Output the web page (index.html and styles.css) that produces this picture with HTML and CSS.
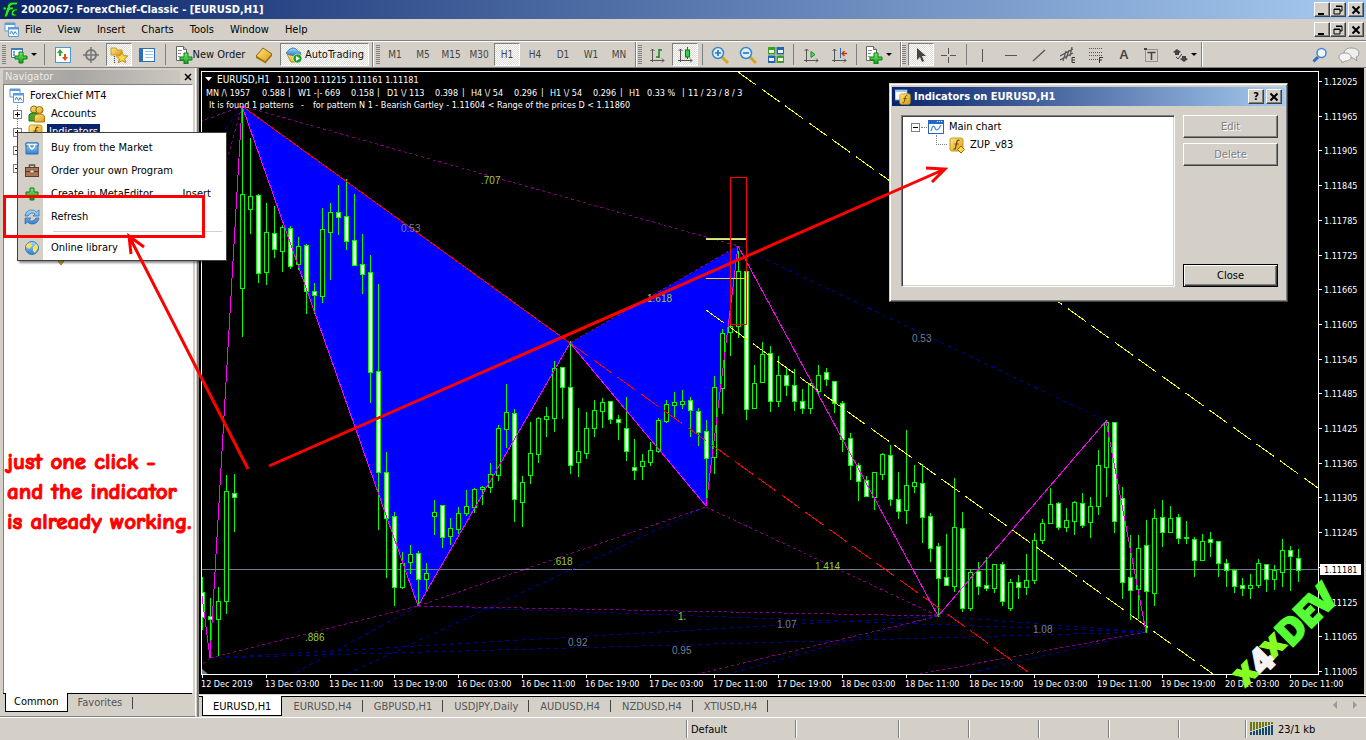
FILE: index.html
```html
<!DOCTYPE html>
<html lang="en">
<head>
<meta charset="utf-8">
<title>2002067: ForexChief-Classic - [EURUSD,H1]</title>
<link rel="stylesheet" href="styles.css">
</head>
<body>
<svg class="defs" aria-hidden="true">
  <defs>
    <linearGradient id="gold" x1="0" y1="0" x2="1" y2="1"><stop offset="0" stop-color="#ffe98a"/><stop offset="1" stop-color="#d99a10"/></linearGradient>
    <linearGradient id="leaf" x1="0" y1="0" x2="0" y2="1"><stop offset="0" stop-color="#7df06a"/><stop offset="1" stop-color="#0f9a1c"/></linearGradient>
    <linearGradient id="sky" x1="0" y1="0" x2="0" y2="1"><stop offset="0" stop-color="#a9dcf8"/><stop offset="1" stop-color="#2f7fd0"/></linearGradient>
    <symbol id="i-charts" viewBox="0 0 16 16"><path d="M1 1h10v8H1z" fill="#fff" stroke="#5b9bd8"/><path d="M1 1h10v2H1z" fill="#5b9bd8"/><path d="M4.500 5.500h10v9h-10z" fill="#fff" stroke="#5b9bd8"/><path d="M4 5h11v2.500H4z" fill="#5b9bd8"/><path d="M6 12l1.500-3 2 3.500 1.500-3 2 3" fill="none" stroke="#3c7fc8"/></symbol>
    <symbol id="i-plus" viewBox="0 0 16 16"><path d="M6 2h4v4h4v4h-4v4H6v-4H2V6h4z" fill="url(#leaf)" stroke="#0b7a14"/></symbol>
    <symbol id="i-f" viewBox="0 0 16 16"><rect x="1" y="1" width="13" height="13" rx="2" fill="url(#gold)" stroke="#c49a20"/><path d="M10.500 3.500c-2-1-2.600.5-3 3L6.500 11c-.3 1.200-1 1.300-2 1M5.500 7h4" fill="none" stroke="#6d4a00" stroke-width="1.200"/></symbol>
    <symbol id="i-axes" viewBox="0 0 16 16"><path d="M3.500 2v13M1 13.500h14M1.500 4l2-2 2 2M13 11.500l2 2-2 2" fill="none" stroke="#555"/></symbol>
    <symbol id="i-sheet" viewBox="0 0 18 18"><path d="M1.500.500h7l3 3v11h-10z" fill="#fff" stroke="#666"/><path d="M8.500.500v3h3" fill="#ccc" stroke="#666"/><path d="M3 4.500h4M3 7.500h3M3 10.500h2" stroke="#888"/><path d="M9 7h4v4h4v3h-4v4H9v-4H5v-3h4z" fill="url(#leaf)" stroke="#0b7a14"/></symbol>
  </defs>
</svg>

<header class="titlebar">
  <svg class="app-logo" viewBox="0 0 17 17"><path d="M2 16L5 6Q6 1 11 1H16L15 4H11Q9 4 8 6H12L11 9H8L5 16ZM1 6H5L4 9H1Z" fill="#2ee04a" stroke="#053c0b"/><path d="M16 8Q10 7 9 12Q9 16 14 15L15 13Q11 14 12 11Q13 9 15 10Z" fill="#2ee04a" stroke="#053c0b"/></svg>
  <h1>2002067: ForexChief-Classic - [EURUSD,H1]</h1>
  <div class="winbtns">
    <button class="wb" aria-label="Minimize"><svg viewBox="0 0 12 10"><path d="M2 8h6v2H2z"/></svg></button>
    <button class="wb" aria-label="Restore"><svg viewBox="0 0 12 10"><path d="M4 1h6v5H8M4 1.500h6M2 4h6v5H2zM2 4.500h6" fill="none" stroke="#000"/></svg></button>
    <button class="wb wb-close" aria-label="Close window"><svg viewBox="0 0 12 10"><path d="M2.500 1.500l7 7M9.500 1.500l-7 7" stroke="#000" stroke-width="2"/></svg></button>
  </div>
</header>

<nav class="menubar">
  <svg class="ic16" viewBox="0 0 16 16"><use href="#i-charts"/></svg>
  <button>File</button><button>View</button><button>Insert</button><button>Charts</button><button>Tools</button><button>Window</button><button>Help</button>
  <div class="winbtns">
    <button class="wb" aria-label="Minimize chart"><svg viewBox="0 0 12 10"><path d="M2 8h6v2H2z"/></svg></button>
    <button class="wb" aria-label="Restore chart"><svg viewBox="0 0 12 10"><path d="M4 1h6v5H8M4 1.500h6M2 4h6v5H2zM2 4.500h6" fill="none" stroke="#000"/></svg></button>
    <button class="wb wb-close" aria-label="Close chart"><svg viewBox="0 0 12 10"><path d="M2.500 1.500l7 7M9.500 1.500l-7 7" stroke="#000" stroke-width="2"/></svg></button>
  </div>
</nav>

<div class="toolbar">
  <div class="group g1">
    <i class="grip"></i>
    <button class="tb wide" aria-label="New chart"><svg class="ic18" viewBox="0 0 18 18"><path d="M1.500 2.500h11v9h-11z" fill="#fff" stroke="#3b7fc0"/><path d="M1 2h12v2H1z" fill="#3b7fc0"/><path d="M4 5v5M3 6h2M3 9h2" stroke="#3b7fc0"/><path d="M9 6h4v4h4v3h-4v4H9v-4H5v-3h4z" fill="url(#leaf)" stroke="#0b7a14"/></svg><i class="caret"></i></button>
    <i class="sep"></i>
    <button class="tb" aria-label="Market Watch"><svg class="ic18" viewBox="0 0 18 18"><rect x="1.500" y="1.500" width="15" height="15" fill="#fff" stroke="#4a97d6"/><path d="M6 3l3 4H7v3H5V7H3z" fill="#1fae2c"/><path d="M11 15l-3-4h2V8h2v3h2z" fill="#e0521c"/></svg></button>
    <button class="tb" aria-label="Data Window"><svg class="ic18" viewBox="0 0 18 18"><circle cx="9" cy="9" r="5" fill="none" stroke="#777" stroke-width="2"/><path d="M9 1v16M1 9h16" stroke="#777" stroke-width="1.500"/></svg></button>
    <button class="tb on" aria-label="Navigator"><svg class="ic18" viewBox="0 0 18 18"><path d="M1 2h5l1 2h5v5H1z" fill="url(#gold)" stroke="#c89c2a"/><path d="M4.500 10v7" stroke="#444" stroke-dasharray="1 1"/><path d="M12 6l1.700 3.600 4 .4-3 2.700.9 4-3.600-2-3.600 2 .9-4-3-2.700 4-.4z" fill="#ffd84a" stroke="#b98a14"/></svg></button>
    <button class="tb" aria-label="Terminal"><svg class="ic18" viewBox="0 0 18 18"><rect x="1.500" y="2.500" width="15" height="13" fill="#fff" stroke="#2d6fb6"/><path d="M2 3h3v12H2z" fill="#2d6fb6"/><path d="M7 5.500h8M7 8.500h8M7 11.500h8" stroke="#9bc2e8"/></svg></button>
    <i class="sep"></i>
    <button class="tb text"><svg class="ic18" viewBox="0 0 18 18"><use href="#i-sheet"/></svg>New Order</button>
    <button class="tb" aria-label="MetaEditor"><svg class="ic18" viewBox="0 0 18 18"><path d="M1 10l7-8 9 6-7 8z" fill="url(#gold)" stroke="#8f6205"/><path d="M1 10v2l9 5v-2zM10 16l7-8v2l-7 8z" fill="#a8720a"/></svg></button>
    <button class="tb text on auto"><svg class="ic18" viewBox="0 0 18 18"><path d="M2 8l7 2 7-2-3 8H6z" fill="url(#gold)" stroke="#b98a14"/><path d="M1 7c2-1 3-5 7-5s5 4 8 5c-4 3-11 3-15 0z" fill="url(#sky)" stroke="#3a83ba"/><circle cx="12.500" cy="12.500" r="4.500" fill="#16a32a" stroke="#fff" stroke-width=".6"/><path d="M11 10l4 2.500-4 2.500z" fill="#fff"/></svg>AutoTrading</button>
  </div>
  <div class="group g2">
    <i class="grip"></i>
    <button class="tb tf">M1</button><button class="tb tf">M5</button><button class="tb tf">M15</button><button class="tb tf">M30</button><button class="tb tf on">H1</button><button class="tb tf">H4</button><button class="tb tf">D1</button><button class="tb tf">W1</button><button class="tb tf">MN</button>
  </div>
  <div class="group g3">
    <i class="grip"></i>
    <button class="tb" aria-label="Bar chart"><svg class="ic16" viewBox="0 0 16 16"><use href="#i-axes"/><path d="M10 2v9M10 3h3M7 10h3" stroke="#16861e" stroke-width="1.500"/></svg></button>
    <button class="tb on" aria-label="Candlesticks"><svg class="ic16" viewBox="0 0 16 16"><use href="#i-axes"/><path d="M10.500 0v12" stroke="#0b7a14"/><rect x="8.500" y="3" width="4" height="7" fill="#2ad63a" stroke="#0b7a14"/></svg></button>
    <i class="sep s3"></i>
    <button class="tb" aria-label="Zoom in"><svg class="ic18" viewBox="0 0 18 18"><path d="M11 11l6 6" stroke="#d9a520" stroke-width="3"/><circle cx="7" cy="7" r="5.500" fill="#d9effd" stroke="#3c87c9" stroke-width="1.500"/><path d="M7 4v6M4 7h6" stroke="#2b6fb4" stroke-width="1.600"/></svg></button>
    <button class="tb" aria-label="Zoom out"><svg class="ic18" viewBox="0 0 18 18"><path d="M11 11l6 6" stroke="#d9a520" stroke-width="3"/><circle cx="7" cy="7" r="5.500" fill="#d9effd" stroke="#3c87c9" stroke-width="1.500"/><path d="M4 7h6" stroke="#2b6fb4" stroke-width="1.600"/></svg></button>
    <button class="tb" aria-label="Tile windows"><svg class="ic18" viewBox="0 0 18 18"><path d="M1 1h8v8H1zM9 9h8v8H9z" fill="#3f9e22"/><path d="M9 1h8v8H9zM1 9h8v8H1z" fill="#2264b8"/><path d="M2 4h5v3H2zM11 4h5v3h-5zM2 12h5v3H2zM11 12h5v3h-5z" fill="#eef6ea"/><path d="M9 1v16M1 9h16" stroke="#d4d0c8"/></svg></button>
    <i class="sep s3"></i>
    <button class="tb" aria-label="Auto scroll"><svg class="ic16" viewBox="0 0 16 16"><use href="#i-axes"/><path d="M8 4.500l4 3-4 3z" fill="#5fdc5f" stroke="#158a1c"/></svg></button>
    <button class="tb" aria-label="Chart shift"><svg class="ic16" viewBox="0 0 16 16"><use href="#i-axes"/><path d="M9.500 1v10" stroke="#2a6ca8"/><path d="M16 6.500h-5M13.500 4L11 6.500l2.500 2.500" fill="none" stroke="#cc3010" stroke-width="1.300"/></svg></button>
    <i class="sep s3"></i>
    <button class="tb wide" aria-label="Indicators list"><svg class="ic18" viewBox="0 0 18 18"><use href="#i-sheet"/></svg><i class="caret"></i></button>
  </div>
  <div class="group g4">
    <i class="grip"></i>
    <button class="tb on" aria-label="Cursor"><svg class="ic16" viewBox="0 0 16 16"><path d="M4 1v12l3-3 2 5 2-1-2-5h4z" fill="#444"/></svg></button>
    <button class="tb" aria-label="Crosshair"><svg class="ic16" viewBox="0 0 16 16"><path d="M7.500 1v6M7.500 10v6M0 8.500h6M9 8.500h6" stroke="#555"/></svg></button>
    <i class="sep s3"></i>
    <button class="tb" aria-label="Vertical line"><svg class="ic16" viewBox="0 0 16 16"><path d="M6.500 2v13" stroke="#555"/></svg></button>
    <button class="tb" aria-label="Horizontal line"><svg class="ic16" viewBox="0 0 16 16"><path d="M1 8.500h12" stroke="#555"/></svg></button>
    <button class="tb" aria-label="Trendline"><svg class="ic16" viewBox="0 0 16 16"><path d="M1 14L13 3" stroke="#555" stroke-width="1.300"/></svg></button>
    <button class="tb" aria-label="Equidistant channel"><svg class="ic16" viewBox="0 0 16 16"><path d="M0 9l13-7M0 13l13-7M3 14L6 4M6 12L9 3M10 9l2-9" stroke="#555" stroke-width="1.200"/><path d="M15 10.500h-3v5h3M12 13h3" fill="none" stroke="#333"/></svg></button>
    <button class="tb" aria-label="Fibonacci retracement"><svg class="ic16" viewBox="0 0 16 16"><path d="M1 1.500h14M1 5.500h14M1 8.500h14M1 12.500h9" stroke="#555" stroke-dasharray="1 1"/><path d="M15 10.500h-3.500V16M11.500 13H14" fill="none" stroke="#333"/></svg></button>
    <button class="tb letter" aria-label="Text">A</button>
    <button class="tb" aria-label="Text label"><svg class="ic16" viewBox="0 0 16 16"><path d="M1.500 2.500h12v12h-12z" fill="none" stroke="#555" stroke-dasharray="1 1"/><path d="M3.500 5.500h8M7.500 5v8" stroke="#444" stroke-width="1.600"/><path d="M0 1h3v2H0z" fill="#444"/></svg></button>
    <button class="tb wide" aria-label="Arrows"><svg class="ic16" viewBox="0 0 16 16"><path d="M5 2l4 3-2 1v2H3V6L1 5zM12 15l-4-3 2-1V9h4v2l2 1z" fill="#444"/><path d="M4 10l2 2 4-5" fill="none" stroke="#444"/></svg><i class="caret"></i></button>
  </div>
  <div class="group g5">
    <button class="tb" aria-label="Search"><svg class="ic16" viewBox="0 0 16 16"><path d="M1.500 14.500L6 10" stroke="#2d6fc4" stroke-width="3"/><circle cx="9.500" cy="6" r="4.500" fill="#eef6fd" stroke="#4488d0" stroke-width="1.500"/></svg></button>
    <button class="tb" aria-label="Chat"><svg class="chat" viewBox="0 0 22 16"><path d="M13 1c5 0 8 2 8 5s-2 4-3 4l1 4-4-3c-6 0-9-2-9-5s3-5 7-5z" fill="#eee" stroke="#999"/><path d="M7 6c4 0 6 2 6 4s-2 4-6 4l-3 2v-2c-2-1-3-2-3-4s2-4 6-4z" fill="#f4f4f4" stroke="#999"/></svg></button>
  </div>
</div>

<main class="work">
  <aside class="navigator">
    <div class="nav-head"><span>Navigator</span><button aria-label="Close navigator"><svg viewBox="0 0 8 8"><path d="M1 1l6 6M7 1L1 7" stroke="#000" stroke-width="1.500"/></svg></button></div>
    <ul class="tree">
      <li><svg class="ic16" viewBox="0 0 16 16"><use href="#i-charts"/></svg><span>ForexChief MT4</span></li>
      <li class="sub"><i class="box"></i><svg class="ic18" viewBox="0 0 18 18"><circle cx="6" cy="4.500" r="3.500" fill="url(#gold)" stroke="#8f6a0c"/><path d="M1 16V10q1-2 5-2t5 2v6z" fill="#3dae2c" stroke="#1f6f14"/><circle cx="11.500" cy="5" r="3.500" fill="url(#gold)" stroke="#8f6a0c"/><path d="M6.500 17v-6q1-2 5-2t5 2v6z" fill="url(#gold)" stroke="#a87a10"/></svg><span>Accounts</span></li>
      <li class="sub"><i class="box"></i><svg class="ic16" viewBox="0 0 16 16"><use href="#i-f"/></svg><span class="sel">Indicators</span></li>
      <li class="sub"><i class="box"></i></li>
      <li class="sub"><i class="box"></i></li>
      <li></li><li></li><li></li><li></li>
      <li class="deep"><svg class="ic16" viewBox="0 0 16 16"><path d="M8 3l5 5-5 7-5-7z" fill="url(#gold)" stroke="#a87a10"/></svg></li>
    </ul>
    <p class="note">just one click -<br>and the indicator<br>is already working.</p>
    <div class="nav-tabs"><button class="cur">Common</button><button>Favorites</button></div>
  </aside>

  <section class="charts">
    <div class="chart"><svg id="chart" role="img" aria-label="EURUSD hourly chart"></svg></div>
    <div class="tabs">
      <button class="cur">EURUSD,H1</button><button>EURUSD,H4</button><button>GBPUSD,H1</button><button>USDJPY,Daily</button><button>AUDUSD,H4</button><button>NZDUSD,H4</button><button>XTIUSD,H4</button>
      <div class="scroll"><button aria-label="Scroll left"><svg viewBox="0 0 6 8"><path d="M5 0v8L1 4z"/></svg></button><button aria-label="Scroll right"><svg viewBox="0 0 6 8"><path d="M1 0v8l4-4z"/></svg></button></div>
    </div>
  </section>
</main>

<footer class="status">
  <span class="c-help"></span><span class="c-profile">Default</span><span class="c-time"></span><span></span><span></span><span></span><span></span><span class="c-vol"></span>
  <span class="c-net"><svg viewBox="0 0 24 13" id="net"></svg>23/1 kb</span>
</footer>

<div class="context" role="menu">
  <button role="menuitem"><svg class="ic16" viewBox="0 0 16 16"><path d="M2 3h12v11H2z" fill="url(#sky)" stroke="#2a6fb4"/><path d="M2 3h12v3H2z" fill="#dff0fb" stroke="#2a6fb4"/><path d="M5 5q3 8 6 0" fill="none" stroke="#fff" stroke-width="1.500"/></svg><span>Buy from the Market</span></button>
  <button role="menuitem"><svg class="ic16" viewBox="0 0 16 16"><path d="M5.500 4V2h5v2" fill="none" stroke="#555" stroke-width="1.500"/><rect x="1.500" y="4.500" width="13" height="9" fill="#a9765a" stroke="#5e3a26"/><path d="M2 8.500h12" stroke="#5e3a26"/><path d="M6 7h4v3H6z" fill="#f0e0c0" stroke="#5e3a26" stroke-width=".6"/></svg><span>Order your own Program</span></button>
  <button role="menuitem"><svg class="ic16" viewBox="0 0 16 16"><use href="#i-plus"/></svg><span>Create in MetaEditor</span><kbd>Insert</kbd></button>
  <button role="menuitem"><svg class="ic16" viewBox="0 0 16 16"><path d="M1 7q1-6 7-6 3 0 4.500 2L15 1v6H9l2-2q-4-3-7 2zM15 9q-1 6-7 6-3 0-4.500-2L1 15V9h6l-2 2q4 3 7-2z" fill="url(#sky)" stroke="#2f6ab0" stroke-width=".7"/></svg><span>Refresh</span></button>
  <hr>
  <button role="menuitem"><svg class="ic16" viewBox="0 0 16 16"><circle cx="8" cy="8" r="6.500" fill="url(#sky)" stroke="#2f7fc4"/><path d="M3 4l4-1 1 3-3 3-3-2zM9 7l4-3 1 4-3 5-2-2z" fill="#ffe05a"/></svg><span>Online library</span></button>
</div>

<section class="dialog" role="dialog" aria-labelledby="dlg-title">
  <div class="dlg-head">
    <svg class="ic16" viewBox="0 0 16 16"><rect x="0" y="1" width="12" height="10" fill="#fff" stroke="#5b9bd8"/><path d="M0 1h12v2H0z" fill="#9cc8f0"/><g transform="translate(4 4) scale(.8)"><use href="#i-f" width="16" height="16"/></g></svg>
    <h2 id="dlg-title">Indicators on EURUSD,H1</h2>
    <div class="winbtns">
      <button class="wb q" aria-label="Help">?</button>
      <button class="wb wb-close" aria-label="Close dialog"><svg viewBox="0 0 12 10"><path d="M2.500 1.500l7 7M9.500 1.500l-7 7" stroke="#000" stroke-width="2"/></svg></button>
    </div>
  </div>
  <div class="dlg-body">
    <ul class="dlg-tree">
      <li><i class="box minus"></i><i class="dots"></i><svg class="ic16" viewBox="0 0 16 16"><rect x=".5" y="1.500" width="15" height="13" fill="#fff" stroke="#2a66c0"/><path d="M0 1h16v4H0z" fill="#2a66c0"/><path d="M9 2.500h6" stroke="#fff" stroke-dasharray="1 1"/><path d="M3 12q2-8 4-3t6-3" fill="none" stroke="#4d8fd8" stroke-width="1.300"/></svg><span>Main chart</span></li>
      <li class="leaf"><i class="elbow"></i><svg class="ic16" viewBox="0 0 16 16"><use href="#i-f"/><path d="M12 9l3.500 3.500L12 16l-3.500-3.500z" fill="#ffd84a" stroke="#8f6a0c"/></svg><span>ZUP_v83</span></li>
    </ul>
    <div class="dlg-side"><button disabled>Edit</button><button disabled>Delete</button><button class="default">Close</button></div>
  </div>
</section>

<svg class="marks" aria-hidden="true">
  <rect x="4.500" y="196.500" width="199" height="40"/>
  <path d="M248 469L129 236M131 254L129 236L144 247"/>
  <path d="M269 466L945 169M926 168L945 169L932 182"/>
  <g class="brand" transform="translate(1291 649) rotate(-45)">
    <text class="small" x="-60" y="-5">x</text><text class="small" x="-21" y="-5">x</text><text x="0" y="0">D</text><text x="26" y="0">E</text><text x="44" y="0">V</text><text class="four" x="-40" y="0">4</text>
  </g>
</svg>
<script src="chart.js"></script>
</body>
</html>
```
FILE: styles.css
```css
* { box-sizing: border-box; }
body {
  margin: 0; height: 100vh; overflow: hidden; position: relative;
  display: flex; flex-direction: column;
  background: #d4d0c8; color: #000;
  font: 11px/14px "DejaVu Sans Condensed", "Noto Sans", sans-serif;
}
button { font: inherit; color: inherit; background: none; border: 0; padding: 0; margin: 0; }
h1, h2, p, ul { margin: 0; padding: 0; }
ul { list-style: none; }
.defs { position: absolute; width: 0; height: 0; }
.ic16 { width: 16px; height: 16px; flex: none; }
.ic18 { width: 18px; height: 18px; flex: none; }

.titlebar { height: 19px; flex: none; display: flex; align-items: center; padding: 0 2px; background: linear-gradient(90deg, #0a246a, #a6caf0); color: #fff; }
.titlebar h1 { font-size: 11px; font-weight: bold; padding-left: 2px; }
.app-logo { width: 17px; height: 17px; }
.winbtns { margin-left: auto; display: flex; }
.wb {
  width: 16px; height: 15px; background: #d4d0c8; color: #000; display: flex; align-items: center; justify-content: center;
  border: 1px solid; border-color: #fff #404040 #404040 #fff; box-shadow: inset -1px -1px #808080;
}
.wb svg { width: 12px; height: 10px; }
.wb-close { margin-left: 2px; }
.q { font-weight: bold; }

.menubar { height: 22px; flex: none; display: flex; align-items: center; padding: 0 2px 0 4px; border-bottom: 1px solid #808080; }
.menubar > button { margin-left: 16px; padding-top: 1px; }
.menubar > svg + button { margin-left: 5px; }

.toolbar { height: 27px; flex: none; display: flex; border-top: 1px solid #fff; border-bottom: 1px solid #808080; color: #444; }
.group { display: flex; align-items: center; padding-left: 2px; border-right: 1px solid #808080; box-shadow: 1px 0 #fff; }
.g1 { width: 373px; }
.g2 { width: 263px; padding-left: 3px; }
.g3 { width: 265px; }
.g4 { width: 301px; padding-left: 1px; }
.g5 { flex: 1; border: 0; box-shadow: none; justify-content: flex-end; padding-right: 2px; }
.grip { width: 4px; height: 19px; margin-right: 1px; flex: none; background: repeating-linear-gradient(#808080 0 1px, #d4d0c8 1px 2px); }
.sep { width: 1px; height: 21px; margin: 0 4px; background: #808080; flex: none; }
.s3 { margin: 0 3px; }
.tb { width: 28px; height: 23px; flex: none; display: flex; align-items: center; justify-content: center; }
.g1 .tb { color: #111; }
.on { width: 26px; margin: 0 1px; border: 1px solid; border-color: #808080 #fff #fff #808080; background: repeating-conic-gradient(#fff 0 25%, #dedbd5 0 50%) 0 0 / 2px 2px; }
.tb.wide { width: 36px; gap: 3px; }
.tb.text { width: 80px; }
.tb.auto { width: 89px; gap: 2px; margin-left: 2px; }
.tb.tf { font-size: 10px; }
.letter { font: bold 13px "Liberation Sans", sans-serif; }
.caret { border: 3px solid transparent; border-top-color: #000; border-bottom: 0; }
.toolbar .g1 .wide { width: 33px; }
.g5 .tb { width: 30px; }
.g5 .tb:first-child { width: 28px; }
.chat { width: 22px; height: 16px; }

.work { flex: 1; min-height: 0; display: flex; }
.navigator { width: 196px; flex: none; display: flex; flex-direction: column; padding: 2px 2px 3px 3px; border-right: 1px solid #fff; border-bottom: 1px solid #808080; }
.nav-head { height: 14px; flex: none; display: flex; justify-content: space-between; align-items: center; }
.nav-head span { flex: none; width: 177px; padding-left: 2px; color: #eceae6; background: linear-gradient(90deg, #b4b1ab, #a8a6a2 40%, #cbc7c0); }
.nav-head button { width: 8px; height: 8px; margin-right: 1px; display: flex; }
.tree { flex: 1; background: #fff; border: 1px solid #808080; border-right-color: #fff; border-bottom: 0; padding: 2px 5px; }
.tree li { height: 18px; display: flex; align-items: center; gap: 3px; }
.tree .sub { padding-left: 4px; background: linear-gradient(90deg, transparent 9px, #fff 9px) top left / 9px 100% no-repeat, repeating-linear-gradient(#808080 0 1px, transparent 1px 2px) 8px 0 / 1px 100% no-repeat; }
.tree .deep { padding-left: 44px; }
.tree .sub .box { margin-right: 3px; }
.box { width: 9px; height: 9px; flex: none; border: 1px solid #808080; background: linear-gradient(#000, #000) center / 5px 1px no-repeat, linear-gradient(#000, #000) center / 1px 5px no-repeat, #fff; }
.box.minus { background: linear-gradient(#000, #000) center / 5px 1px no-repeat, #fff; }
.tree span { padding: 1px 2px; }
.sel { background: #0a246a; color: #fff; }
.note { position: absolute; left: 7px; top: 447px; z-index: 2; color: #f00; -webkit-text-stroke: 1px #f00; font: bold 23px/30px "Comic Sans MS", "Comic Neue", Lato, sans-serif; white-space: nowrap; }
.nav-tabs { flex: none; height: 20px; display: flex; border-top: 1px solid #000; padding-left: 2px; margin-right: 1px; color: #555; }
.nav-tabs button { padding: 0 8px; height: 18px; }
.nav-tabs button + button { padding: 0 11px 0 10px; background: linear-gradient(#444, #444) right center / 1px 12px no-repeat; }
.nav-tabs .cur { background: #fff; color: #000; border: 1px solid #000; border-top: 0; margin-top: -1px; height: 19px; }

.charts { flex: 1; min-width: 0; display: flex; flex-direction: column; border-left: 2px solid #808080; margin-left: 1px; }
.chart { flex: 1; min-height: 0; background: #000; margin-right: 2px; overflow: hidden; }
.chart svg { display: block; width: 100%; height: 100%; font: 9px "DejaVu Sans Condensed", "Noto Sans", sans-serif; fill: #fff; }
.tabs { height: 22px; flex: none; display: flex; align-items: flex-start; margin-top: 1px; padding-left: 3px; border-top: 1px solid #fff; color: #555; box-shadow: inset 0 1px #000; border-bottom: 1px solid #d4d0c8; }
.tabs > button { padding: 2px 11px 0 11px; height: 20px; background: linear-gradient(#444, #444) right center / 1px 12px no-repeat; }
.tabs .cur { padding: 2px 10px 0; background: #fff; color: #000; border: 1px solid #000; border-top: 0; }
.scroll { margin-left: auto; display: flex; gap: 14px; padding: 5px 8px 0 0; }
.scroll svg { width: 6px; height: 8px; fill: #999; display: block; }

.status { height: 23px; flex: none; display: flex; align-items: stretch; padding: 2px 0; border-top: 1px solid #fff; }
.status span { width: 70px; flex: none; border-left: 1px solid #808080; box-shadow: inset 1px 0 #fff; padding: 2px 4px; line-height: 16px; }
.status .c-help { flex: 1; border: 0; box-shadow: none; }
.status .c-profile { width: 109px; }
.status .c-time { width: 103px; }
.status .c-vol { width: 67px; }
.status .c-net { width: 121px; display: flex; gap: 4px; }
.c-net svg { width: 24px; height: 13px; }

.context { position: absolute; left: 17px; top: 132px; width: 210px; z-index: 4; border: 1px solid #404040; padding: 3px 1px 1px; background: linear-gradient(90deg, #d4d0c8 0 25px, #fff 25px); box-shadow: 2px 2px 2px rgba(0,0,0,.45); }
.context button { width: 100%; height: 23px; display: flex; align-items: center; text-align: left; padding-left: 5px; gap: 11px; }
.context kbd { font: inherit; margin-left: auto; padding-right: 14px; }
.context hr { margin: 3px 3px 4px 34px; border: 0; border-top: 1px solid #d4d0c8; }

.dialog { position: absolute; left: 889px; top: 83px; width: 399px; height: 219px; z-index: 4; display: flex; flex-direction: column; padding: 2px; background: #d4d0c8; border: 1px solid; border-color: #d4d0c8 #404040 #404040 #d4d0c8; box-shadow: inset 1px 1px #fff, inset -1px -1px #808080; }
.dlg-head { height: 19px; margin: 1px 0; flex: none; display: flex; align-items: center; gap: 3px; padding: 0 3px; color: #fff; background: linear-gradient(90deg, #0a246a, #a6caf0); }
.dlg-head h2 { font-size: 11px; }
.dlg-body { flex: 1; display: flex; gap: 8px; padding: 8px 7px 12px 9px; }
.dlg-tree { flex: 1; background: #fff; border: 1px solid; border-color: #808080 #fff #fff #808080; box-shadow: inset 1px 1px #404040, inset -1px -1px #d4d0c8; padding: 2px 9px; }
.dlg-tree li { height: 18px; display: flex; align-items: center; }
.dlg-tree span { margin-left: 5px; }
.dots { width: 6px; margin: 0 1px; border-top: 1px dotted #808080; }
.leaf { padding-left: 25px; }
.elbow { width: 11px; height: 10px; margin: -10px 2px 0 0; border-left: 1px dotted #808080; border-bottom: 1px dotted #808080; }
.dlg-side { width: 95px; display: flex; flex-direction: column; gap: 5px; }
.dlg-side button { height: 23px; background: #d4d0c8; border: 1px solid; border-color: #fff #404040 #404040 #fff; box-shadow: inset -1px -1px #808080; }
.dlg-side button:disabled { color: #808080; text-shadow: 1px 1px #fff; }
.dlg-side .default { margin-top: auto; border-color: #000; box-shadow: inset 1px 1px #fff, inset -1px -1px #404040, inset -2px -2px #808080; }

.marks { position: absolute; left: 0; top: 0; width: 100%; height: 100%; z-index: 5; pointer-events: none; }
.marks rect, .marks path { fill: none; stroke: #f00; stroke-width: 3; }
.brand { font: 800 38px "Open Sans", sans-serif; fill: #5f3; stroke: #5f3; stroke-width: 1; }
.brand .small { font-size: 34px; fill: #8f2; stroke: #8f2; }
.brand .four { fill: #f4f4f4; stroke: #f4f4f4; font-size: 36px; }

.crisp { shape-rendering: crispEdges; fill: none; }
.candle { shape-rendering: crispEdges; }
.zz { stroke: #f0f; }
.dotp { stroke: #800080; stroke-dasharray: 3 3; }
.dotb { stroke: #00008b; stroke-dasharray: 4 4; }
.dash { stroke-dasharray: 22 7; }
.yel { stroke: #ff0; }
.red { stroke: #f00; }
.ratio { font: 10px "Liberation Sans", sans-serif; fill: #9acd32; }
.ratio.dim { fill: #708090; }
.head { font-size: 10px; }
```
FILE: chart.js
```js
// Rows: high, body top, body bottom, low, kind (1 = bearish); one bar every 8px.
const bars = `577 592 617 629 1|598 616 619 657 1|587 601 619 655 0|475 491 601 613 0|474 493 497 531 1|106 194 288 336 0|138 196 209 233 0|194 195 273 282 1|203 232 272 284 0|206 233 249 257 1|225 227 251 271 0|226 228 266 268 1|237 246 264 269 0|244 245 291 313 1|283 291 295 313 1|208 229 296 302 0|203 212 232 279 0|185 212 217 234 1|179 216 241 249 1|194 240 265 265 1|234 264 274 293 1|255 272 372 402 1|284 371 472 529 1|452 472 518 577 1|512 516 587 605 1|552 563 587 588 0|545 554 562 573 0|551 553 579 605 1|563 573 579 591 0|500 512 516 534 0|505 505 537 547 1|518 528 536 544 0|507 513 529 533 0|490 506 513 515 0|488 489 507 512 0|486 487 489 504 0|463 474 487 492 0|425 428 475 480 0|384 412 429 447 0|409 413 499 521 1|476 482 502 526 0|422 453 475 483 0|417 418 454 462 0|407 416 419 436 0|361 368 418 431 0|367 367 387 418 1|341 387 465 473 1|408 451 462 476 0|412 428 453 458 0|400 410 428 436 0|398 402 411 427 0|401 401 419 423 1|415 419 422 439 1|397 428 451 460 1|439 467 470 479 1|454 461 466 479 0|442 450 462 465 0|418 420 451 452 0|400 404 421 422 0|392 402 405 416 0|390 401 404 408 0|397 400 410 436 1|408 411 432 445 1|420 431 458 505 1|376 387 457 473 0|329 333 388 413 0|324 326 332 355 0|251 271 326 337 0|271 271 409 419 1|365 383 408 408 0|342 354 382 382 0|346 353 401 411 1|356 375 401 406 0|368 375 385 395 1|369 385 401 410 1|389 401 408 413 1|383 383 408 413 0|365 375 391 393 0|368 372 379 385 1|381 381 403 412 1|401 403 439 451 1|433 438 465 479 1|463 465 481 500 1|476 480 496 496 1|472 472 497 509 0|453 454 474 479 0|445 455 499 505 1|472 499 511 518 1|430 485 510 523 0|465 482 486 492 0|464 483 517 542 1|513 516 548 561 1|543 546 578 616 1|534 577 585 585 1|478 527 586 591 0|512 528 608 611 1|569 572 608 610 0|562 571 586 594 1|557 585 588 590 1|564 564 588 592 0|562 564 601 605 1|579 582 608 610 0|575 582 587 598 1|554 580 587 594 0|533 540 580 583 0|519 523 540 543 0|488 504 523 523 0|502 503 527 529 1|508 520 527 531 0|501 502 521 534 0|493 503 525 527 1|497 506 522 537 0|450 465 506 514 0|420 422 467 496 0|422 422 521 532 1|487 498 582 598 1|535 577 590 619 1|535 548 589 618 0|520 545 591 632 1|509 518 593 605 0|500 517 532 546 1|506 518 532 532 0|514 517 538 543 1|521 537 538 543 1|537 539 560 576 1|534 541 560 560 0|532 539 542 556 1|541 541 563 576 1|559 563 570 586 1|569 570 586 592 1|578 585 588 595 1|574 585 588 598 0|559 563 585 587 0|564 564 579 591 1|565 570 579 589 0|539 550 572 586 0|546 550 556 590 1|549 558 570 581 1`
  .split('|').map(r => r.split(' ').map(Number));

const line = (cls, pts) => `<polyline class="crisp ${cls}" points="${pts}"/>`;
const text = (x, y, s, cls = '') => `<text x="${x}" y="${y}" class="${cls}">${s.replace(/</g, '&lt;')}</text>`;
let o = '';

o += '<path fill="#00f" d="M242 106L570 343L418 606ZM570 343L738 246L706 506Z"/>';
o += '<path fill="#708090" d="M201 668l7 6h-7z"/>';
o += '<path class="crisp" stroke="#708090" d="M201 569.5H1318"/>';
[[210,658,1146,632],[210,658,938,616],[418,606,1146,632],[738,246,1106,421],[938,616,1146,632],[418,606,293,674],[706,507,347,674],[938,616,728,674],[1146,632,965,674],[242,106,222,134]]
  .forEach(([a, b, c, d]) => { o += line('dotb', `${a},${b} ${c},${d}`); });
[[242,106,738,246],[210,658,418,606],[418,606,706,507],[570,343,738,246],[706,507,938,616],[418,606,938,616],[938,616,698,674],[1146,632,920,674],[242,106,202,121],[242,106,226,163],[210,658,202,665]]
  .forEach(([a, b, c, d]) => { o += line('dotp', `${a},${b} ${c},${d}`); });

bars.forEach(([h, t, b, l, bear], i) => {
  const x = 202 + i * 8;
  o += `<path class="candle" stroke="#0f0" d="M${x + .5} ${h}V${l + 1}"/>`;
  o += `<rect class="candle" x="${x - 1.5}" y="${t + .5}" width="4" height="${b - t}" stroke="#0f0" fill="${bear ? '#fff' : '#000'}"/>`;
});

o += line('red', '242,106 570,343') + line('red dash', '570,343 1028,672');
o += line('yel dash', '706,310 1213,674') + line('yel dash', '738,72 1318,488');
o += line('zz', '202,596 210,658 242,106 418,606 570,343 706,506 738,246 938,616 1106,421 1146,632');
o += '<path class="crisp" stroke="#ffd700" d="M706 238.500H746M706 278.500H746"/><path class="crisp" stroke="#afeeee" d="M706 239.500H746"/>';
o += '<rect class="crisp" x="730.5" y="177.500" width="16" height="147" stroke="#f00"/>';

// The frame and axes hide whatever the plot draws outside them.
o += '<path fill="#000" d="M1319 68h47v630h-47zM199 675h1167v25H199zM199 68h2v630h-2z"/>';
o += '<path class="crisp" stroke="#fff" d="M1318.500 674.500H201.500V71.500H1318.500Z"/>';
for (let i = 0; i < 18; i++) {
  const y = 81 + Math.round(i * 34.7);
  if (i !== 14) o += text(1324, y + 4, (1.12025 - i * 0.0006).toFixed(5));
  o += `<path class="crisp" stroke="#fff" d="M1319 ${y + .5}h3"/>`;
}
o += '<rect x="1320" y="564" width="41" height="11"/><text x="1324" y="573" style="fill:#000">1.11181</text>';
['12 Dec 2019','13 Dec 03:00','13 Dec 11:00','13 Dec 19:00','16 Dec 03:00','16 Dec 11:00','16 Dec 19:00','17 Dec 03:00','17 Dec 11:00','17 Dec 19:00','18 Dec 03:00','18 Dec 11:00','18 Dec 19:00','19 Dec 03:00','19 Dec 11:00','19 Dec 19:00','20 Dec 03:00','20 Dec 11:00']
  .forEach((s, i) => { o += text(201 + i * 64, 687, s) + `<path class="crisp" stroke="#fff" d="M${202.5 + i * 64} 675v3"/>`; });

o += '<path d="M205 77h7l-3.500 4z"/>' + text(217, 83, 'EURUSD,H1', 'head') + text(277, 83, '1.11200 1.11215 1.11161 1.11181');
[[206,'MN /\\ 1957'],[262,'0.588'],[298,'W1 -|- 669'],[351,'0.158'],[387,'D1 \\/ 113'],[435,'0.398'],[471,'H4 \\/ 54'],[514,'0.296'],[550,'H1 \\/ 54'],[593,'0.296'],[629,'H1'],[647,'0.33 %'],[688,'11 / 23 / 8 / 3']]
  .forEach(([x, s]) => { o += text(x, 96, s); });
[288, 377, 462, 541, 620, 682].forEach(x => { o += text(x, 95, '|'); });
o += text(209, 108, 'It is found 1 patterns') + text(301, 108, '-') + text(313, 108, 'for pattern N 1 - Bearish Gartley - 1.11604 < Range of the prices D < 1.11860');

[[481,184,'.707'],[647,302,'1.618'],[305,641,'.886'],[553,565,'.618'],[678,620,'1.'],[815,570,'1.414']].forEach(([x, y, s]) => { o += text(x, y, s, 'ratio'); });
[[401,232,'0.53'],[912,342,'0.53'],[568,646,'0.92'],[672,654,'0.95'],[777,628,'1.07'],[1033,633,'1.08']].forEach(([x, y, s]) => { o += text(x, y, s, 'ratio dim'); });

document.getElementById('chart').innerHTML = `<g transform="translate(-199 -68)">${o}</g>`;

let n = '';
for (let i = 0; i < 8; i++) {
  const split = 9 - i;
  n += `<rect x="${i * 3}" y="0" width="2" height="${split}" fill="#6b7a10"/><rect x="${i * 3}" y="${split + 1}" width="2" height="${12 - split}" fill="#124a70"/>`;
}
document.getElementById('net').innerHTML = n;
```
